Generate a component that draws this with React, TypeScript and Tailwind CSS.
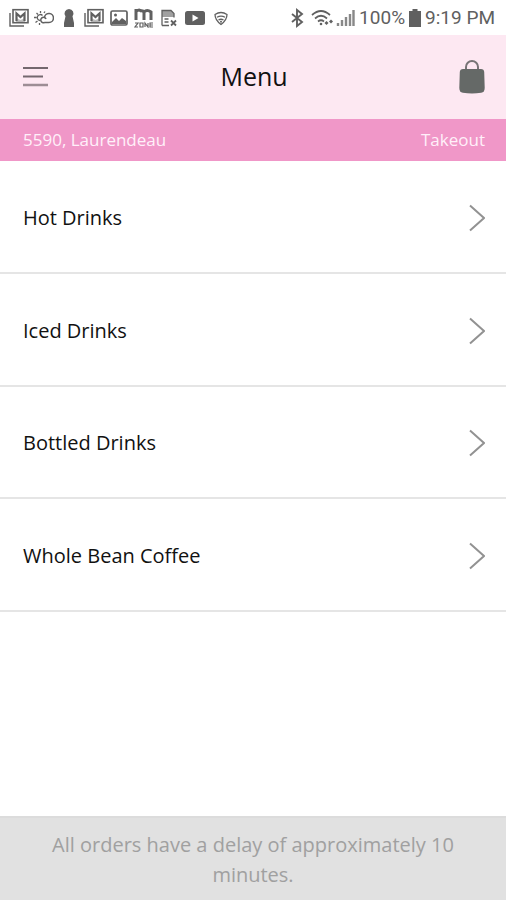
import type { ReactNode } from 'react';

const categories = ['Hot Drinks', 'Iced Drinks', 'Bottled Drinks', 'Whole Bean Coffee'];

function Glyph({ children, className = 'w-5' }: { children: ReactNode; className?: string }) {
  return (
    <svg viewBox="0 0 20 20" className={`h-5 shrink-0 ${className}`} fill="none" stroke="currentColor" aria-hidden="true">
      {children}
    </svg>
  );
}

function GalleryMail() {
  return (
    <Glyph>
      <path d="M1 5V18H15" strokeWidth="1.4" />
      <rect x="4" y="1.700" width="15" height="13" strokeWidth="1.600" />
      <path d="M7.500 13V5.500l4 3.500 4-3.500V13" strokeWidth="2.200" />
      <path d="M7 14v-4l4.500 2L16 10v4z" fill="currentColor" stroke="none" opacity=".4" />
    </Glyph>
  );
}

function StatusBar() {
  return (
    <div className="flex h-[35px] items-center justify-between bg-white pr-[11px] pl-[9px] text-[#606060]">
      <div className="flex items-center gap-[5px]">
        <GalleryMail />
        <Glyph>
          <path d="M10.500 14.500H15a4.500 4.500 0 1 0-4.500-5.200M12 11a2.700 2.700 0 1 0-1.500 3.500M10.500 9.300" strokeWidth="1.500" />
          <path d="M8.500 7.500a3 3 0 1 0-2.500 5M6.500 3v2M2.500 5l1.500 1.500M0 9.500h2.500M1.500 14.500l2-1.500M5.500 15v2M10 5l1-1.500" strokeWidth="1.300" />
        </Glyph>
        <Glyph>
          <path d="M10 1a4.500 4.500 0 0 1 3.500 7.300L15 15v4H5v-4l1.500-6.700A4.500 4.500 0 0 1 10 1z" fill="currentColor" stroke="none" />
        </Glyph>
        <GalleryMail />
        <Glyph>
          <rect x="2" y="3" width="16" height="14" rx="1.500" strokeWidth="1.700" />
          <path d="M3 14l4-4 3 3 3-3 4 3v3H3z" fill="currentColor" stroke="none" />
          <circle cx="6.500" cy="7" r="1.500" fill="currentColor" stroke="none" />
        </Glyph>
        <Glyph>
          <path d="M2 12V1M2 3.500q4-3 5 0M10 12V4q-1-2-4-1M10 4q3-3 7 0V12" strokeWidth="3" />
          <path d="M1 15h3l-3 4h3M6 15h3v4H6zM11 19v-4l3 4v-4M19 15h-3v4h3M16 17h3" strokeWidth="1.200" />
        </Glyph>
        <Glyph>
          <path d="M3 2.500h9l3 3V9H3z" fill="currentColor" stroke="none" opacity=".6" />
          <path d="M3 17.500V2.500h9l3 3v4M3 17.500h7M5.500 11h4M5.500 14h4" strokeWidth="1.300" />
          <path d="M12 12.500l5 5M17 12.500l-5 5" strokeWidth="1.800" />
        </Glyph>
        <Glyph className="w-[22px]">
          <rect x="0" y="3" width="20" height="14" rx="2.500" fill="currentColor" stroke="none" />
          <path d="M7.500 6.500v7l6-3.500z" fill="white" stroke="none" />
        </Glyph>
        <Glyph>
          <path d="M4 6.500q6-4 12 0 0 5.500-6 10-6-4.500-6-10zM6 9.300q4-2.500 8 0M7.500 12q2.500-1.500 5 0" strokeWidth="1.300" />
          <circle cx="10" cy="13.700" r="1" fill="currentColor" stroke="none" />
        </Glyph>
      </div>
      <div className="flex items-center font-['Roboto','Liberation_Sans',sans-serif] text-[19px] leading-6 whitespace-nowrap">
        <Glyph>
          <path d="M5 6l10 8-5 4V2l5 4-10 8" strokeWidth="1.900" />
        </Glyph>
        <Glyph className="ml-1 w-6">
          <path d="M-1 7q9-8 18 0M2 10.500q6-5.500 12 0M5 13.500q3-2.500 6 0" strokeWidth="1.700" />
          <circle cx="8" cy="16" r="1.300" fill="currentColor" stroke="none" />
          <path d="M13.500 13l2 2-2 2-2-2zM18 11.500l2 2-2 2-2-2z" fill="currentColor" stroke="none" />
        </Glyph>
        <Glyph>
          <path d="M3 18v-3M7 18v-6M11 18V9M15 18V6M18.500 18V2" strokeWidth="2.400" opacity=".75" />
        </Glyph>
        <span className="ml-1">100%</span>
        <Glyph>
          <path d="M7.500 1h5v2H16v16H4V3h3.500z" fill="currentColor" stroke="none" />
        </Glyph>
        <span>9:19 PM</span>
      </div>
    </div>
  );
}

export default function App() {
  return (
    <div className="flex min-h-screen flex-col bg-white font-['Open_Sans','Noto_Sans',sans-serif] text-[#111111]">
      <StatusBar />
      <header className="grid h-[84px] grid-cols-[1fr_auto_1fr] items-center bg-[#fde8f2] pr-[21px] pl-[23px]">
        <button type="button" aria-label="Open navigation" className="justify-self-start">
          <svg viewBox="0 0 26 22" className="h-[22px] w-[26px]" fill="none" strokeWidth="2" aria-hidden="true">
            <path d="M0 2h25M0 10.500h20" stroke="#74676e" />
            <path d="M0 19h25" stroke="#9d8d95" strokeWidth="2.500" />
          </svg>
        </button>
        <h1 className="pb-0.5 text-[25px] leading-8">Menu</h1>
        <button type="button" aria-label="Shopping bag" className="justify-self-end">
          <svg viewBox="0 0 26 36" className="h-9 w-[26px]" aria-hidden="true">
            <path d="M7 12V8a6 6 0 0 1 12 0v4" fill="none" stroke="#777476" strokeWidth="2" />
            <path d="M4 10h18q3 0 3.200 3l.5 16q0 4-3.500 4.800-9.200 1.400-18.400 0Q.3 33 .3 29l.5-16Q1 10 4 10z" fill="#656967" />
          </svg>
        </button>
      </header>
      <div className="flex h-[42px] items-center justify-between bg-[#f097c8] pr-[21px] pl-[23px] text-[17px] leading-6 text-[#fff0f9]">
        <span>5590, Laurendeau</span>
        <span>Takeout</span>
      </div>
      <nav aria-label="Menu categories" className="grid min-h-[451px] auto-rows-fr">
        {categories.map((category) => (
          <a key={category} href="#" className="flex items-center justify-between border-b-2 border-[#e5e5e5] pt-[3px] pr-[21px] pl-[23px] text-[20px] leading-7">
            {category}
            <svg viewBox="0 0 16 28" className="h-7 w-4" fill="none" stroke="#929292" strokeWidth="2" aria-hidden="true">
              <path d="M1 1.500L15 14 1 26.500" />
            </svg>
          </a>
        ))}
      </nav>
      <footer className="mt-auto border-t-2 border-[#dcdcdc] bg-[#e1e1e1] px-10 pt-3 pb-[10px] text-center text-[20px] leading-[30px] text-[#a0a0a0]">
        All orders have a delay of approximately 10 minutes.
      </footer>
    </div>
  );
}
